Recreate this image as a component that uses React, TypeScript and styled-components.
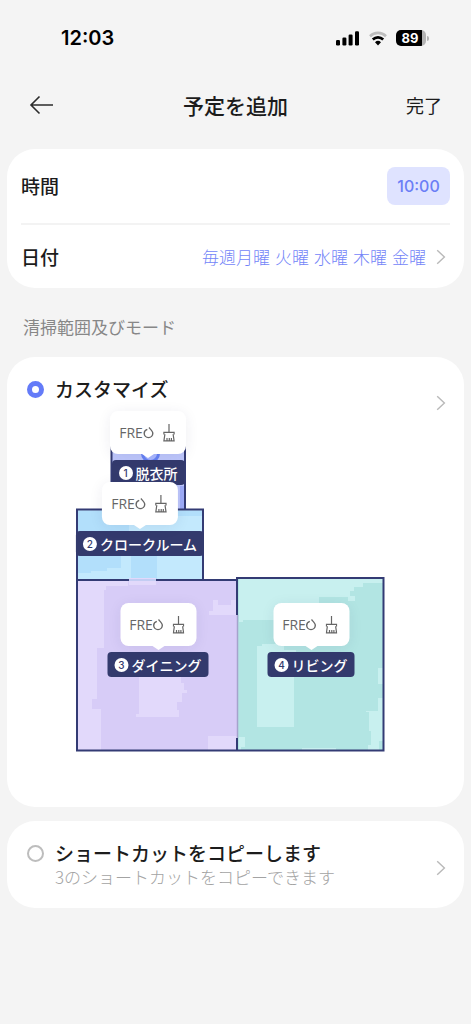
import React from "react";
import styled, { createGlobalStyle } from "styled-components";

const GlobalStyle = createGlobalStyle`
  * { box-sizing: border-box; }
  body {
    margin: 0;
    background: #f4f4f4;
    color: #1c1c1c;
    font-family: Inter, "Noto Sans CJK JP", sans-serif;
  }
  h1, h2, p { margin: 0; }
  button {
    margin: 0;
    padding: 0;
    border: 0;
    background: none;
    color: inherit;
    font: inherit;
    cursor: pointer;
  }
`;

const jp = `"Noto Sans CJK JP", sans-serif`;

const Screen = styled.div`
  min-height: 100vh;
  background: #f4f4f4;
`;

const StatusBar = styled.div`
  display: flex;
  align-items: center;
  justify-content: space-between;
  height: 76px;
  padding: 0 42px 0 61px;
`;

const Clock = styled.span`
  font-size: 20px;
  font-weight: 600;
  line-height: 24px;
  color: #000;
`;

const StatusIcons = styled.div`
  display: flex;
  align-items: center;
  gap: 9px;
`;

const Battery = styled.span`
  display: flex;
  align-items: center;
  gap: 1px;
`;

const BatteryBody = styled.span`
  width: 30px;
  height: 16px;
  border-radius: 5px;
  background: linear-gradient(to right, #000 26px, #b4b4b4 26px);
  color: #fff;
  font-size: 13px;
  font-weight: 700;
  line-height: 16px;
  padding-right: 2px;
  text-align: center;
`;

const BatteryTip = styled.span`
  width: 2px;
  height: 5px;
  border-radius: 0 2px 2px 0;
  background: #b4b4b4;
`;

const Header = styled.header`
  display: grid;
  grid-template-columns: 1fr auto 1fr;
  align-items: center;
  height: 58px;
  margin-bottom: 15px;
  padding: 0 29px;
`;

const BackButton = styled.button`
  display: flex;
  justify-self: start;
`;

const PageTitle = styled.h1`
  font-family: ${jp};
  font-size: 21px;
  font-weight: 500;
  line-height: 32px;
`;

const DoneButton = styled.button`
  justify-self: end;
  font-family: ${jp};
  font-size: 18px;
  line-height: 32px;
`;

const Main = styled.main`
  padding: 0 7px;
`;

const Card = styled.section`
  border-radius: 28px;
  background: #fff;
`;

const SettingsCard = styled(Card)`
  padding: 0 14px;
`;

const SettingRow = styled.div<{ $divided?: boolean }>`
  display: flex;
  align-items: center;
  justify-content: space-between;
  height: ${(p) => (p.$divided ? 76 : 63)}px;
  border-bottom: ${(p) => (p.$divided ? "2px solid #f3f3f3" : "0")};
`;

const RowLabel = styled.label`
  font-family: ${jp};
  font-size: 19px;
  font-weight: 500;
  line-height: 28px;
`;

const TimeButton = styled.button`
  width: 63px;
  height: 38px;
  border-radius: 8px;
  background: #dfe3ff;
  color: #6b7ef6;
  font-size: 16px;
  font-weight: 500;
`;

const DateButton = styled.button`
  display: flex;
  align-items: center;
  gap: 10px;
  padding-right: 4px;
  color: #7385f8;
  font-family: ${jp};
  font-size: 17px;
  font-weight: 300;
  line-height: 28px;
`;

const Days = styled.span`
  display: flex;
  gap: 5px;
`;

const SectionTitle = styled.h2`
  padding: 25px 16px 16px;
  color: #878787;
  font-family: ${jp};
  font-size: 17px;
  font-weight: 400;
  line-height: 28px;
`;

const ModeCard = styled(Card)`
  margin-bottom: 14px;
  padding: 16px 18px 54px 20px;
`;

const ModeHeader = styled.div`
  display: flex;
  justify-content: space-between;
  height: 38px;
`;

const Option = styled.label`
  display: flex;
  align-items: flex-start;
  gap: 11px;
`;

const Radio = styled.input`
  appearance: none;
  width: 17px;
  height: 17px;
  margin: 8px 0 0;
  border: 2px solid #bdbdbd;
  border-radius: 50%;
  background: #fff;
  &:checked { border: 5px solid #647bf8; }
`;

const OptionTitle = styled.span`
  display: block;
  font-family: ${jp};
  font-size: 19px;
  font-weight: 500;
  line-height: 32px;
`;

const OptionNote = styled.span`
  display: block;
  color: #a3a3a3;
  font-family: ${jp};
  font-size: 17px;
  font-weight: 300;
  line-height: 16px;
`;

const OpenButton = styled.button<{ $align?: string }>`
  display: flex;
  align-self: ${(p) => p.$align || "center"};
`;

const CopyCard = styled(Card)`
  display: flex;
  justify-content: space-between;
  padding: 16px 18px 9px 20px;
  min-height: 87px;
`;

const MapArea = styled.div`
  position: relative;
  width: 321px;
  margin: 0 auto;
`;

const MapDrawing = styled.svg`
  display: block;
  width: 100%;
`;

const Pin = styled.div<{ $x: number; $y: number }>`
  position: absolute;
  left: ${(p) => p.$x}px;
  top: ${(p) => p.$y}px;
  display: flex;
  flex-direction: column;
  align-items: center;
  gap: 6px;
  transform: translateX(-50%);
`;

const Bubble = styled.button`
  position: relative;
  display: flex;
  align-items: center;
  justify-content: center;
  gap: 9px;
  width: 76px;
  height: 43px;
  padding-right: 2px;
  border-radius: 8px;
  background: #fff;
  box-shadow: 0 2px 14px rgba(40, 40, 90, 0.08);
  color: #666;
  &::after {
    content: "";
    position: absolute;
    top: 100%;
    left: 50%;
    margin-left: -6px;
    border: 6px solid transparent;
    border-top: 4px solid #fff;
    border-bottom: 0;
  }
`;

const Brand = styled.span`
  display: flex;
  align-items: center;
  font-family: "Open Sans", sans-serif;
  font-size: 14px;
  font-weight: 500;
  line-height: 18px;
`;

const RoomLabel = styled.span`
  display: flex;
  align-items: center;
  gap: 3px;
  height: 25px;
  padding: 0 7px;
  border-radius: 4px;
  background: #333a6d;
  color: #fff;
  font-family: ${jp};
  font-size: 14px;
  font-weight: 500;
  line-height: 24px;
  white-space: nowrap;
`;

const RoomNumber = styled.span`
  width: 14px;
  height: 14px;
  border-radius: 50%;
  background: #fff;
  color: #333a6d;
  font-family: Inter, sans-serif;
  font-size: 10px;
  font-weight: 500;
  line-height: 14px;
  text-align: center;
`;

const Chevron = () => (
  <svg width="10" height="16" viewBox="0 0 10 16" fill="none" stroke="#b9b9b9" strokeWidth="1.4" aria-hidden="true">
    <path d="M1.2 1.2 8.4 8l-7.2 6.8" />
  </svg>
);

const Broom = () => (
  <svg width="12" height="18" viewBox="0 0 12 18" fill="none" stroke="#666" strokeWidth="1.2" aria-hidden="true">
    <path d="M6 0v8M.9 10.500V8.300h10.200v2.200M1.900 10.200.9 16.900h10.200l-1-6.700M4 16.500V14M6.300 16.500V14M8.400 16.500V14" />
  </svg>
);

const Drop = () => (
  <svg width="11" height="13" viewBox="0 0 11 13" fill="none" stroke="#666" strokeWidth="1.4" aria-hidden="true">
    <path d="M4.300 3.300C2.300 4 1.200 5.600 1.200 7.300a4.300 4.300 0 0 0 8.600 0c0-1.900-1.800-3.600-3.800-5.700" />
  </svg>
);

const Signal = () => (
  <svg width="24" height="15" viewBox="0 0 24 15" aria-hidden="true">
    <rect x="0" y="9" width="4" height="5.5" rx="1.2" />
    <rect x="6.4" y="6.5" width="4" height="8" rx="1.2" />
    <rect x="12.6" y="3.5" width="4" height="11" rx="1.2" />
    <rect x="19" y="0.2" width="4" height="14.3" rx="1.2" />
  </svg>
);

const Wifi = () => (
  <svg width="18" height="15" viewBox="0 0 18 15" fill="none" aria-hidden="true">
    <path d="M1 5.2a11.4 11.4 0 0 1 16 0" stroke="#bdbdbd" strokeWidth="2.6" />
    <path d="M3.8 8.5a7.4 7.4 0 0 1 10.4 0" stroke="#000" strokeWidth="2.6" />
    <path d="m9 14.4-3-3.1a4.3 4.3 0 0 1 6 0Z" fill="#000" />
  </svg>
);

const rooms = [
  { name: "脱衣所", x: 72, y: 0 },
  { name: "クロークルーム", x: 64, y: 71 },
  { name: "ダイニング", x: 82, y: 192 },
  { name: "リビング", x: 235, y: 192 },
];

const days = ["毎週月曜", "火曜", "水曜", "木曜", "金曜"];

const FloorPlan = () => (
  <MapDrawing viewBox="76 411 321 342" aria-hidden="true">
    <path fill="#bdc6fb" d="M111 440h74v69h-74z" />
    <path fill="#9eacf8" d="M180 486h5v23h-5z" />
    <path fill="none" stroke="#333b74" strokeWidth="2" d="M111.500 509v-69H185v69" />
    <circle cx="150.500" cy="453.500" r="8" fill="#a9b7ff" stroke="#6580f3" strokeWidth="3" />

    <path fill="#c3e9fd" d="M77 509h126v70H77z" />
    <path fill="#b2dffb" d="M78 511h51v20H78zM78 573h13v-2h16v-3h14v-13H78zM131 553h26v26h-26zM170 511h32v5h-32z" />

    <path fill="#d7ccf7" d="M78 580h159v171H78z" />
    <path
      fill="#e2d9fb"
      d="M78 581h50v5h-22v4h-2v58h-7v51h-5v10h9v42H78zM129 578h27v7h-27zM213 600h5v5h13v-5h6v15h-28v-4h4zM139 677h42v6h3v7h3v3h-5v9h-5v8h2v7h-43v-3h3zM208 736h29v14h-29z"
    />

    <path fill="#b2e5e3" d="M238 577h146v174H238z" />
    <path
      fill="#c8f0ef"
      d="M239 578h144v5h-20v4h-9v4h-4v5h5v5h-7v-4h-29v10h-42v13h-34v2h-4zM257 646h5v-2h22v6h12v27h-2v50h-37zM383 668v73h-4v9h-11v-5h3v-14h-2v-19h-3v-1h12v-13h5v-14h-5v-16zM239 737h6v10h-4v3h-2zM302 748h34v3h-34z"
    />
    <path
      fill="none"
      stroke="#333b74"
      strokeWidth="2"
      d="M129 580H77V509.500h126V580h-47M203 580h34M77 580v170.500h306.500V578H237v37M237 738v13"
    />
    <path stroke="#a5a3cc" strokeWidth="1.500" d="M237.500 615v123" />
    <path stroke="#c3cdf3" strokeWidth="2" d="M129 580h27" />
  </MapDrawing>
);

export default function App() {
  return (
    <Screen>
      <GlobalStyle />
      <StatusBar>
        <Clock>12:03</Clock>
        <StatusIcons>
          <Signal />
          <Wifi />
          <Battery>
            <BatteryBody>89</BatteryBody>
            <BatteryTip />
          </Battery>
        </StatusIcons>
      </StatusBar>
      <Header>
        <BackButton aria-label="戻る">
          <svg width="25" height="20" viewBox="0 0 25 20" fill="none" stroke="#2b2b2b" strokeWidth="1.600" aria-hidden="true">
            <path d="M24 10H2M10.500 1.500 2 10l8.500 8.500" />
          </svg>
        </BackButton>
        <PageTitle>予定を追加</PageTitle>
        <DoneButton>完了</DoneButton>
      </Header>
      <Main>
        <SettingsCard>
          <SettingRow $divided>
            <RowLabel htmlFor="time">時間</RowLabel>
            <TimeButton id="time">10:00</TimeButton>
          </SettingRow>
          <SettingRow>
            <RowLabel htmlFor="date">日付</RowLabel>
            <DateButton id="date">
              <Days>
                {days.map((day) => (
                  <span key={day}>{day}</span>
                ))}
              </Days>
              <Chevron />
            </DateButton>
          </SettingRow>
        </SettingsCard>
        <SectionTitle>清掃範囲及びモード</SectionTitle>
        <ModeCard>
          <ModeHeader>
            <Option>
              <Radio type="radio" name="mode" defaultChecked />
              <OptionTitle>カスタマイズ</OptionTitle>
            </Option>
            <OpenButton $align="flex-end" aria-label="カスタマイズを開く">
              <Chevron />
            </OpenButton>
          </ModeHeader>
          <MapArea>
            <FloorPlan />
            {rooms.map((room, i) => (
              <Pin key={room.name} $x={room.x} $y={room.y}>
                <Bubble>
                  <Brand>
                    FRE
                    <Drop />
                  </Brand>
                  <Broom />
                </Bubble>
                <RoomLabel>
                  <RoomNumber>{i + 1}</RoomNumber>
                  {room.name}
                </RoomLabel>
              </Pin>
            ))}
          </MapArea>
        </ModeCard>
        <CopyCard>
          <Option>
            <Radio type="radio" name="mode" />
            <span>
              <OptionTitle>ショートカットをコピーします</OptionTitle>
              <OptionNote>3のショートカットをコピーできます</OptionNote>
            </span>
          </Option>
          <OpenButton aria-label="ショートカットを開く">
            <Chevron />
          </OpenButton>
        </CopyCard>
      </Main>
    </Screen>
  );
}
